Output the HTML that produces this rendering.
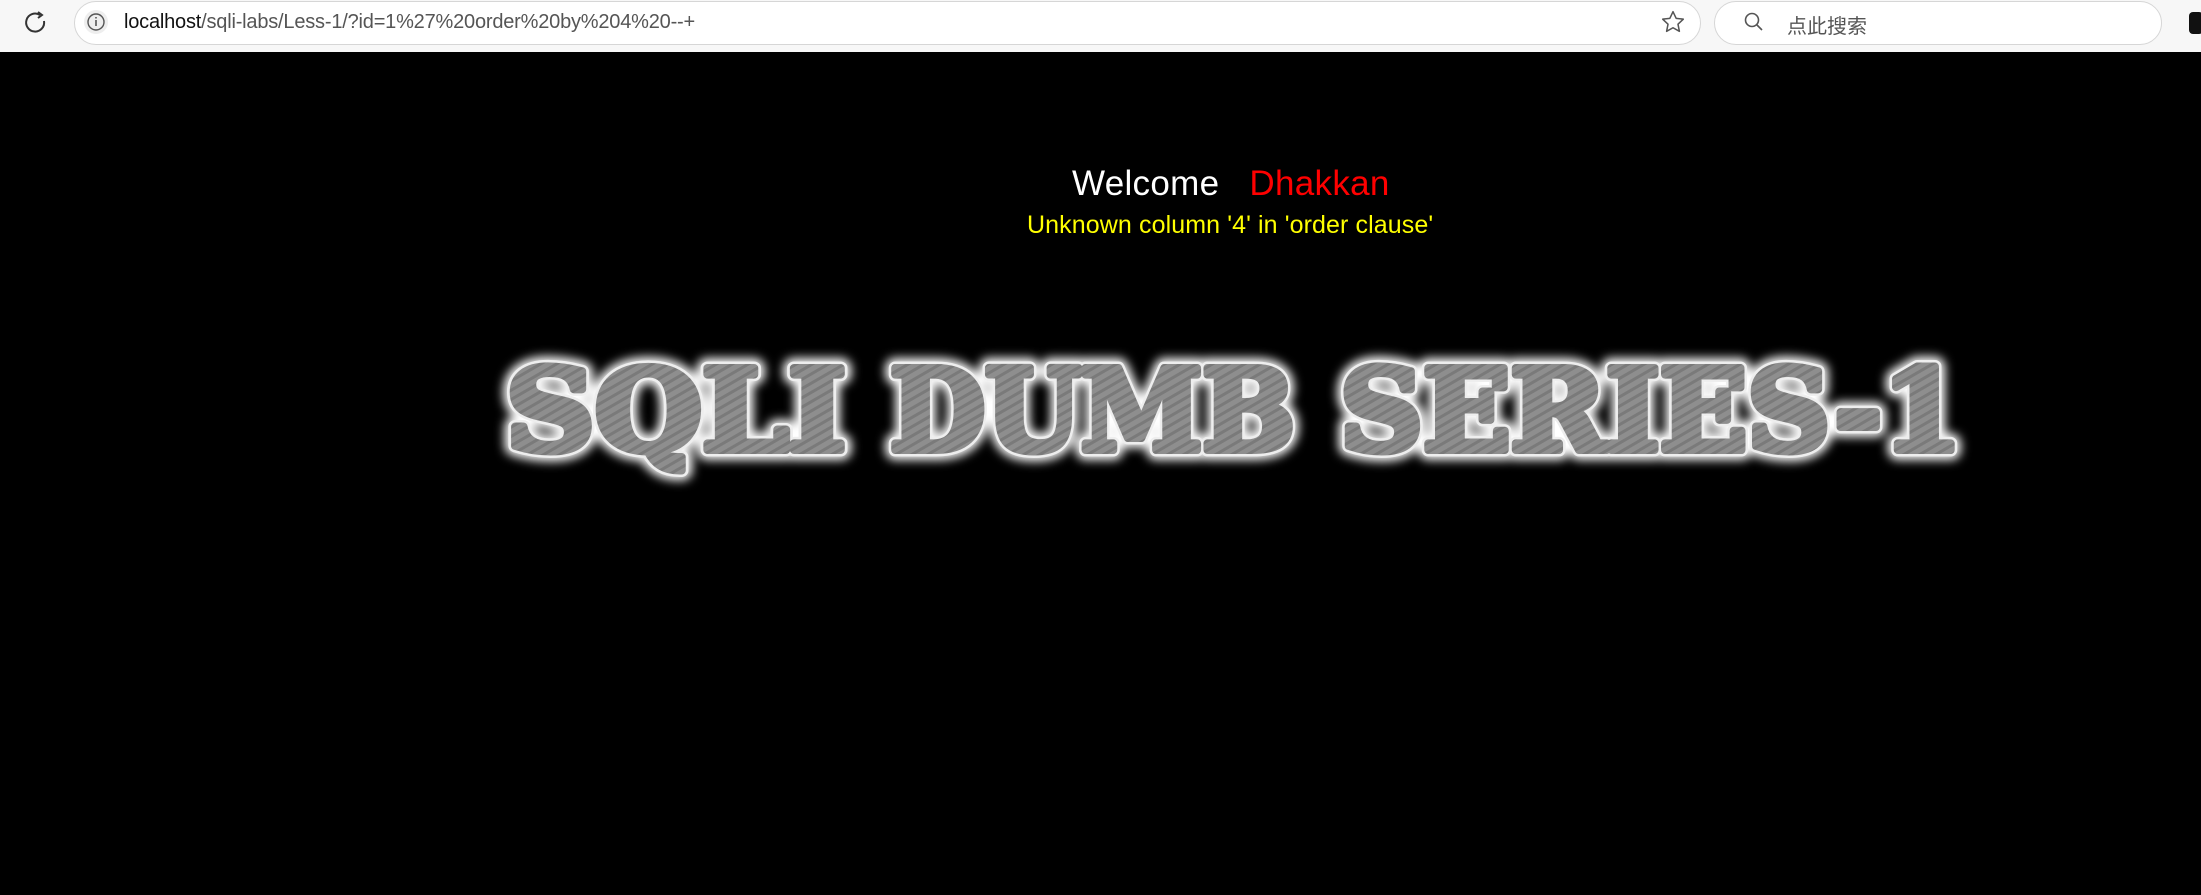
<!DOCTYPE html>
<html><head><meta charset="utf-8"><style>
html,body{margin:0;padding:0;width:2201px;height:895px;overflow:hidden;background:#000;}
#bar{position:absolute;left:0;top:0;width:2201px;height:52px;background:#f7f7f7;}
#url{position:absolute;left:74px;top:1px;width:1625px;height:42px;background:#fff;border:1px solid #d6d6d6;border-radius:22px;}
#search{position:absolute;left:1714px;top:1px;width:446px;height:42px;background:#fff;border:1px solid #d6d6d6;border-radius:22px;}
.t{position:absolute;font-family:"Liberation Sans","Noto Sans CJK SC",sans-serif;white-space:nowrap;}
</style></head><body>
<div id="bar">
<svg style="position:absolute;left:22px;top:9px" width="28" height="28" viewBox="0 0 28 28"><path d="M22 12 A9 9 0 1 1 18 6" fill="none" stroke="#333" stroke-width="2"/><path d="M16 3 L20 6 L16 9" fill="none" stroke="#333" stroke-width="2"/></svg>
<div id="url"></div>
<svg style="position:absolute;left:84px;top:10px" width="24" height="24" viewBox="0 0 24 24"><circle cx="12" cy="12" r="12" fill="#eee"/><circle cx="12" cy="12" r="8" fill="none" stroke="#555" stroke-width="1.4"/><path d="M12 10v6M12 7v1.5" stroke="#555" stroke-width="1.6"/></svg>
<div class="t" style="left:124px;top:11px;font-size:20px;color:#555;letter-spacing:-0.2px"><span style="color:#111">localhost</span>/sqli-labs/Less-1/?id=1%27%20order%20by%204%20--+</div>
<svg style="position:absolute;left:1660px;top:9px" width="26" height="26" viewBox="0 0 24 24"><path d="M12 2.5l2.9 6.1 6.6.8-4.9 4.6 1.3 6.6L12 17.3 6.1 20.6l1.3-6.6L2.5 9.4l6.6-.8z" fill="none" stroke="#555" stroke-width="1.4" stroke-linejoin="round"/></svg>
<div id="search"></div>
<svg style="position:absolute;left:1742px;top:10px" width="24" height="24" viewBox="0 0 24 24"><circle cx="10" cy="10" r="6.5" fill="none" stroke="#555" stroke-width="1.6"/><path d="M15 15l5 5" stroke="#555" stroke-width="1.6"/></svg>
<div class="t" style="left:1787px;top:10px;font-size:20px;color:#555">点此搜索</div>
<div style="position:absolute;left:2189px;top:12px;width:14px;height:22px;background:#111;border-radius:4px"></div>
</div>
<div class="t" style="left:1072px;top:164px;font-size:35px;color:#fff;letter-spacing:0.3px">Welcome&nbsp;&nbsp;&nbsp;<span style="color:#f00">Dhakkan</span></div>
<div class="t" style="left:1027px;top:211px;font-size:25px;color:#ff0;letter-spacing:0.1px">Unknown column '4' in 'order clause'</div>
<svg style="position:absolute;left:0;top:0" width="2201" height="895">
<defs>
<filter id="g" x="-5%" y="-30%" width="110%" height="160%"><feGaussianBlur stdDeviation="5"/></filter>
<pattern id="p" width="8" height="8" patternUnits="userSpaceOnUse" patternTransform="rotate(60)"><rect width="8" height="8" fill="#8e8e8e"/><rect width="3" height="8" fill="#7a7a7a"/></pattern>
<g id="w" font-family="DejaVu Serif" font-weight="bold" font-size="112">
<text x="506" y="450" textLength="340" lengthAdjust="spacingAndGlyphs">SQLI</text>
<text x="890" y="450" textLength="405" lengthAdjust="spacingAndGlyphs">DUMB</text>
<text x="1340" y="450" textLength="622" lengthAdjust="spacingAndGlyphs">SERIES-1</text>
</g>
</defs>
<use href="#w" fill="#fff" stroke="#fff" stroke-width="20" stroke-linejoin="round" filter="url(#g)"/>
<use href="#w" fill="#fff" stroke="#eee" stroke-width="13" stroke-linejoin="round"/>
<use href="#w" fill="url(#p)" stroke="url(#p)" stroke-width="8" stroke-linejoin="round"/>
</svg>
</body></html>
